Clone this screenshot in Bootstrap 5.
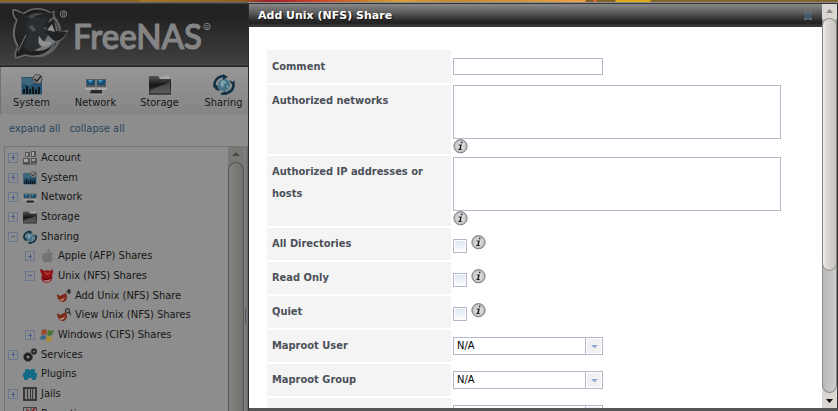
<!DOCTYPE html>
<html lang="en">
<head>
<meta charset="utf-8">
<title>FreeNAS</title>
<link rel="stylesheet" href="https://cdn.jsdelivr.net/npm/bootstrap@5.3.0/dist/css/bootstrap.min.css">
<style>
body{width:838px;height:411px;background:#8d8d8d;font:11px/14px "DejaVu Sans Condensed","DejaVu Sans",sans-serif;font-stretch:condensed;color:#161616}
svg{display:block;flex:none}
.wide{font-family:"DejaVu Sans",sans-serif;font-stretch:normal}
.topstrip{height:2px;background:linear-gradient(90deg,#8c6424 0 140px,#a5762c 141px,#8d6325 240px,#a11c2c 270px,#cc482d 320px,#c7842c 370px,#d7a13b 400px,#c08b35 450px,#d3943b 520px,#eba34a 585px,#85602a 586px 593px,#e06945 594px 596px,#806129 597px 615px,#dbaa17 616px 650px,#83652d 651px)}
.side{width:248px}
.brand{height:65px;background:linear-gradient(#5d5d5d 0 1px,#232323 2px,#222 15px,#404040 61px,#4a4a4a 63px,#222 64px)}
.tools{height:47px;background:linear-gradient(#969696,#858585);border-left:1px solid #6b747c}
.tool{width:64px;padding-top:7px;padding-right:3px}
.tool svg{margin-bottom:1px}
.links{height:32px;padding:8px 0 0 9px;color:#27455f;gap:9px}
.treebox{margin-left:4px;width:240px;border:1px solid #747474;border-bottom:0;border-right:0}
.node{height:19.7px;flex:none;gap:4px;white-space:nowrap}
.exp{width:10px;height:10px;border:1px solid #6b7790;flex:none;margin-right:1px;background:linear-gradient(#4b5f8a,#4b5f8a) center/4px 1px no-repeat}
.plus{background:linear-gradient(#4b5f8a,#4b5f8a) center/4px 1px no-repeat,linear-gradient(#4b5f8a,#4b5f8a) center/1px 5px no-repeat}
.noexp{width:10px;margin-right:1px;flex:none}
.dimbar{width:16px;background:#7a7874}
.dimthumb{border:1px solid #555;border-bottom:0;border-radius:8px 8px 0 0;background:linear-gradient(90deg,#858380,#72706c)}
.splitter{width:4px;background:linear-gradient(90deg,#878787,#696969)}
.dlg{left:248px;top:3px;width:590px;height:408px;background:#fff;border:1px solid #333;border-top:1px solid #343539;border-left-color:#2b2b2b;border-bottom:3px solid #555}
.title-strip{height:23px;background:linear-gradient(#888 0,#606060 8px,#262626 17px,#242424 20px,#383838 21px);color:#fff;font-weight:700;padding:0 9px 0 9px;text-shadow:1px 1px 1px #111}
.formgrid{margin:23px 0 0 18px;display:grid;grid-template-columns:184px 328px;column-gap:2px;row-gap:2px;grid-template-rows:33px 69px 70px repeat(6,32px)}
.lbl{background:#f4f4f4;color:#4b5059;font-weight:700;font-size:11px;line-height:22px;padding:5px 5px}
.lbl:first-child{padding-top:6px}
.inp{border:1px solid #b3b8c8;background:#fff}
.inp.one{width:150px;height:17px;margin-top:8px}
.inp.area{width:328px;height:54px}
.inp.sel{width:150px;height:18px;margin-top:7px;color:#000;padding-left:3px;line-height:16px}
.arrow{width:17px;border-left:1px solid #b3b8c8;background:#f1f1f1;box-shadow:inset 0 0 0 1px #fff}
.chk{width:14px;height:14px;border:1px solid #b3b8c8;background:linear-gradient(#d9e5ee,#fff);box-shadow:inset 0 0 0 1px #fff;margin:11px 4px 0 0}
.tip{margin-top:7px}
.sbar{width:15px;background:#dad7d3}
.strack{background:linear-gradient(90deg,#b9b9b8,#cecdcc);border:1px solid #8b8b8b;border-radius:0 0 8px 8px;border-top:0}
.sthumb{height:253px;margin:-1px -1px 0;border:1px solid #888580;border-radius:8px;background:linear-gradient(90deg,#eceae8 0 1px,#dedbd8 3px,#c7c3bf)}
</style>
<script src="https://cdn.jsdelivr.net/npm/bootstrap@5.3.0/dist/js/bootstrap.bundle.min.js"></script>
</head>
<body class="m-0 overflow-hidden position-relative">
<svg width="0" height="0" class="position-absolute">
<defs>
<radialGradient id="ig"><stop offset="0" stop-color="#eee"/><stop offset="1" stop-color="#bbb"/></radialGradient>
<linearGradient id="fg" x2="0" y2="1"><stop stop-color="#555"/><stop offset=".5" stop-color="#151515"/><stop offset="1" stop-color="#555"/></linearGradient>
<linearGradient id="bg" x2="1" y2="1"><stop stop-color="#333"/><stop offset="1" stop-color="#858b91"/></linearGradient>
<symbol id="info" viewBox="0 0 15 15"><circle cx="7.5" cy="7.2" r="6.6" fill="url(#ig)" stroke="#777"/><path d="M8.2 2.8h1.4l-.4 1.5H7.8zM5.7 5.6h3.2L7.8 10h1l-.3.9H5.2l.3-.9h.7l.9-3.4H5.5z" fill="#222"/></symbol>
<symbol id="sys" viewBox="0 0 22 21"><rect x=".5" y="3" width="20.500" height="17.500" fill="#235170"/><path d="M1 4h19v6L14 8l-5 4-8-3z" fill="#40687d"/><path d="M3 20v-5m3 5v-8m3 8v-5m3 5v-7m3 7v-5m3 5v-7" stroke="#111" stroke-width="1.800"/><circle cx="16.500" cy="5" r="4.600" fill="#858585" stroke="#4d4d4d"/><path d="M13.500 5l2.200 2.500L20 2" fill="none" stroke="#222" stroke-width="1.300"/></symbol>
<symbol id="net" viewBox="0 0 22 21"><path d="M1 5h9.500v8H1zm10.500 0H21v8h-9.500z" fill="#555a5d"/><path d="M2 6h7.500v5H2zm10.500 0H20v5h-7.500z" fill="#104f76"/><path d="M3 6h5L5 9zm10 0h5l-3 3z" fill="#5493ac"/><path d="M0 14h10v2H0zm12 0h10v2H12z" fill="#aaa"/><path d="M6 16h11v4H5z" fill="#292929"/><path d="M5 20h13" stroke="#aaa"/></symbol>
<symbol id="fold" viewBox="0 0 22 21"><path d="M11 3l8-2 2 3v3H11z" fill="#a5a5a5"/><path d="M0 2h9l2 3h11v15.500H0z" fill="url(#fg)"/><path d="M1 18C6 12 14 12 21 8v11.500H1z" fill="#666" opacity=".65"/><path d="M0 20h22" stroke="#222"/></symbol>
<symbol id="share" viewBox="0 0 22 21"><circle cx="11" cy="11" r="6" fill="#427184"/><path d="M8 7l3-1 3 3-3 1-1 4-3-3zM14 11l2 1-2 3z" fill="#7ea3ad"/><path d="M2 13C0 7 5 2 11 2M20 8c2 6-2 11-9 12" fill="none" stroke="#102f43" stroke-width="2.600"/><path d="M10 0l5 3-5 3zM12 17l-5 3 5 2zM0 12l4-1 3 6-4-1zM16 6l4 2 2-2-2 6z" fill="#153449"/></symbol>
<symbol id="acct" viewBox="0 0 14 14"><path d="M2 1h5v5H2zM8 0h5v6H8zM0 7h7v6H0zM8 7h6v5H8z" fill="#555"/><path d="M3 2h2v3H3zm6-1h2v4H9zM1 8h4v3H1zm8 0h3v2H9z" fill="#a3a3a3"/><path d="M0 13h14" stroke="#444"/></symbol>
<symbol id="apple" viewBox="0 0 14 14"><path d="M7 4c3-2 5-1 6 1-2 2-1 4 0 5-1 3-3 4-6 3-3 1-5-2-5-5s2-5 5-4zM7 3c0-2 1-3 3-3 0 2-1 3-3 3z" fill="#727272"/></symbol>
<symbol id="nfs" viewBox="0 0 14 14"><path d="M0 0c2 0 3 1 4 2 2-1 4-1 6 0l3-2c0 3 0 4-1 6 1 4-1 7-5 8-5-1-7-4-5-8C1 4 0 2 0 0z" fill="#8f1217"/><path d="M3 8c3 3 7 2 9-1-1 4-2 5-5 5-2 0-4-1-4-4z" fill="#650509"/><path d="M3 10.500c3 1.500 5 1 8-1-1 2.500-2 3.500-4 3.500-2 0-3-1-4-2.500z" fill="#b08d8d"/><path d="M4 3l4 1 3-1-2 3-3 0z" fill="#b4372e"/></symbol>
<symbol id="nfsadd" viewBox="0 0 14 14"><path d="M0 5l3 2 2-1 4-2 1 4c0 3-2 5-5 5-3-1-5-4-5-8z" fill="#7c2918"/><path d="M2 10c2 1 4 0 6-2-1 3-2 4-4 4z" fill="#b38c7e"/><path d="M12 0v5M9.500 2.500h5" stroke="#333" stroke-width="1.800"/></symbol>
<symbol id="nfsview" viewBox="0 0 14 14"><path d="M0 5l3 2 2-1 4-2 1 4c0 3-2 5-5 5-3-1-5-4-5-8z" fill="#7c2918"/><path d="M2 10c2 1 4 0 6-2-1 3-2 4-4 4z" fill="#b69c90"/><circle cx="10.500" cy="2.700" r="2" fill="#888" stroke="#333" stroke-width="1.200"/><path d="M12 4l2 3" stroke="#333" stroke-width="1.500"/></symbol>
<symbol id="win" viewBox="0 0 14 14"><path d="M2 2c2-1 3-1 5 0L6 7C4 6 3 6 1 7z" fill="#98472a"/><path d="M8 2c2 1 4 1 6 0l-2 5c-2 1-3 1-5 0z" fill="#4b7734"/><path d="M1 8c2-1 3-1 5 0l-1 4c-2-1-3-1-5 0z" fill="#36658c"/><path d="M7 8c2 1 3 1 5 0l-1 5c-2 1-4 1-5 0z" fill="#a78c29"/></symbol>
<symbol id="gear" viewBox="0 0 14 14"><g fill="none" stroke="#222"><circle cx="5" cy="9" r="2.800" stroke-width="2.600"/><circle cx="5" cy="9" r="4.400" stroke-dasharray="1.500 1"/><circle cx="11" cy="3.500" r="1.800" stroke-width="1.800"/><circle cx="11" cy="3.500" r="3" stroke-dasharray="1 1"/></g></symbol>
<symbol id="plug" viewBox="0 0 14 14"><path d="M2.500 2h3.500v1h2V2h3.500l1 4H14v4h-1v3H9v-2H5v2H1v-3H0V6h1.500z" fill="#146b86"/></symbol>
<symbol id="jail" viewBox="0 0 14 14"><path d="M0 0h14v14H0z" fill="#383838"/><path d="M2 2h2v10H2zm3 0h2v10H5zm3 0h1v10H8zm2 0h2v10h-2z" fill="#858585"/></symbol>
<symbol id="rep" viewBox="0 0 14 14"><path d="M.5.500h13v13H.5zM4 0v14M8 0v14M0 5h14" fill="none" stroke="#444"/><path d="M1 6l4-2 3 2 4-5" fill="none" stroke="#8d2524" stroke-width="2"/></symbol>
</defs></svg>

<div class="topstrip"></div>
<div class="side d-flex flex-column" style="height:409px">
  <header class="brand flex-shrink-0">
    <svg width="248" height="65" viewBox="0 2 248 65">
      <circle cx="37" cy="33" r="23" fill="#292b2d" stroke="#606263" stroke-width="2.500"/>
      <path d="M13 10c3-1 7 2 10 4 8-6 18-7 28-1l3-1-1 8c3 4 4 7 4 13l10-2c-2 6-6 10-12 11-5 12-17 17-30 13l-9 3c-2-4 0-8 2-12-5-8-5-18-1-26-3-2-4-6-4-10z" fill="#1e1e1e" stroke="#676869" stroke-width="1.600"/>
      <circle cx="38" cy="32" r="19" fill="url(#bg)"/>
      <path d="M16 12c6 0 11 4 15 7 9-6 15-7 23-6-4 4-6 9-7 14l-9 1-4 5 7 3c-2 6-5 9-11 11l-8 1-5 8 2-14c-4-9-3-17-1-24z" fill="#222425"/>
      <path d="M26 22l10-5 11 2-3 8 4 8-7 12-10 5-8-5 5-12z" fill="#2b2e30"/>
      <path d="M48 23l6-4 2 12 11 1c-3 6-8 10-14 8l-8-8z" fill="#202122"/>
      <path d="M39 36l4 5 9 1c-3 4-7 6-11 4-3-2-3-6-2-10zM47 30l5-6 3 8z" fill="#909090"/>
      <path d="M29 27l3-2 4 5-3 2z" fill="#4d5256"/>
      <path d="M18 51l8-16" stroke="#777"/>
      <g fill="none" stroke="#808080"><circle cx="63.500" cy="14" r="3.200"/><circle cx="207" cy="26.500" r="3.200"/></g>
      <text x="61.700" y="16.400" font-size="6" fill="#858585" font-family="Lato,sans-serif">R</text><text x="205.200" y="28.900" font-size="6" fill="#858585" font-family="Lato,sans-serif">R</text>
      <text x="73" y="48.500" font-size="34.500" font-weight="500" fill="#858585" stroke="#858585" stroke-width="1.200" font-family="Lato,sans-serif" textLength="129" lengthAdjust="spacingAndGlyphs">FreeNAS</text>
    </svg>
  </header>
  <nav class="tools d-flex flex-shrink-0 overflow-hidden">
    <div class="tool flex-shrink-0 d-flex flex-column align-items-center"><svg width="22" height="21"><use href="#sys"/></svg>System</div>
    <div class="tool flex-shrink-0 d-flex flex-column align-items-center"><svg width="22" height="21"><use href="#net"/></svg>Network</div>
    <div class="tool flex-shrink-0 d-flex flex-column align-items-center"><svg width="22" height="21"><use href="#fold"/></svg>Storage</div>
    <div class="tool flex-shrink-0 d-flex flex-column align-items-center"><svg width="22" height="21"><use href="#share"/></svg>Sharing</div>
  </nav>
  <div class="links d-flex flex-shrink-0"><span>expand all</span><span>collapse all</span></div>
  <div class="d-flex flex-grow-1" style="min-height:0">
    <div class="treebox d-flex overflow-hidden">
      <div class="flex-grow-1 d-flex flex-column overflow-hidden" style="padding:1px 0 0 3px">
        <div class="node d-flex align-items-center"><i class="exp plus"></i><svg width="14" height="14"><use href="#acct"/></svg>Account</div>
        <div class="node d-flex align-items-center"><i class="exp plus"></i><svg width="14" height="14"><use href="#sys"/></svg>System</div>
        <div class="node d-flex align-items-center"><i class="exp plus"></i><svg width="14" height="14"><use href="#net"/></svg>Network</div>
        <div class="node d-flex align-items-center"><i class="exp plus"></i><svg width="14" height="14"><use href="#fold"/></svg>Storage</div>
        <div class="node d-flex align-items-center"><i class="exp"></i><svg width="14" height="14"><use href="#share"/></svg>Sharing</div>
        <div class="node d-flex align-items-center" style="padding-left:17px"><i class="exp plus"></i><svg width="14" height="14"><use href="#apple"/></svg>Apple (AFP) Shares</div>
        <div class="node d-flex align-items-center" style="padding-left:17px"><i class="exp"></i><svg width="14" height="14"><use href="#nfs"/></svg>Unix (NFS) Shares</div>
        <div class="node d-flex align-items-center" style="padding-left:34px"><i class="noexp"></i><svg width="14" height="14"><use href="#nfsadd"/></svg>Add Unix (NFS) Share</div>
        <div class="node d-flex align-items-center" style="padding-left:34px"><i class="noexp"></i><svg width="14" height="14"><use href="#nfsview"/></svg>View Unix (NFS) Shares</div>
        <div class="node d-flex align-items-center" style="padding-left:17px"><i class="exp plus"></i><svg width="14" height="14"><use href="#win"/></svg>Windows (CIFS) Shares</div>
        <div class="node d-flex align-items-center"><i class="exp plus"></i><svg width="14" height="14"><use href="#gear"/></svg>Services</div>
        <div class="node d-flex align-items-center"><i class="noexp"></i><svg width="14" height="14"><use href="#plug"/></svg>Plugins</div>
        <div class="node d-flex align-items-center"><i class="exp plus"></i><svg width="14" height="14"><use href="#jail"/></svg>Jails</div>
        <div class="node d-flex align-items-center"><i class="noexp"></i><svg width="14" height="14"><use href="#rep"/></svg>Reporting</div>
      </div>
      <div class="dimbar flex-shrink-0 d-flex flex-column"><svg width="16" height="15"><path d="M4 9l4-4 4 4z" fill="#484848"/></svg><div class="dimthumb flex-grow-1"></div></div>
    </div>
    <div class="splitter"><svg width="4" height="260"><path d="M1.500 161v17" stroke="#52555d"/></svg></div>
  </div>
</div>

<div class="dlg position-absolute d-flex">
  <div class="flex-grow-1 overflow-hidden">
    <div class="title-strip wide d-flex align-items-center justify-content-between"><span>Add Unix (NFS) Share</span><svg width="10" height="10" viewBox="0 0 10 10"><path d="M1 1.500h3l1 1.500 1-1.500h3L6.500 5 9 8.500H6L5 7 4 8.500H1L3.500 5z" fill="#405463" stroke="#78818a" stroke-width=".7"/></svg></div>
    <div class="formgrid">
      <div class="lbl">Comment</div><div><div class="inp one"></div></div>
      <div class="lbl">Authorized networks</div><div><div class="inp area"></div><svg width="15" height="15"><use href="#info"/></svg></div>
      <div class="lbl">Authorized IP addresses or hosts</div><div style="padding-top:1px"><div class="inp area"></div><svg width="15" height="15"><use href="#info"/></svg></div>
      <div class="lbl">All Directories</div><div class="d-flex"><div class="chk"></div><svg width="15" height="15" class="tip"><use href="#info"/></svg></div>
      <div class="lbl">Read Only</div><div class="d-flex"><div class="chk"></div><svg width="15" height="15" class="tip"><use href="#info"/></svg></div>
      <div class="lbl">Quiet</div><div class="d-flex"><div class="chk"></div><svg width="15" height="15" class="tip"><use href="#info"/></svg></div>
      <div class="lbl">Maproot User</div><div><div class="inp sel d-flex justify-content-between"><span>N/A</span><div class="arrow"><svg width="16" height="16"><path d="M5 7h7L8.500 10.500z" fill="#8eabd3"/></svg></div></div></div>
      <div class="lbl">Maproot Group</div><div><div class="inp sel d-flex justify-content-between"><span>N/A</span><div class="arrow"><svg width="16" height="16"><path d="M5 7h7L8.500 10.500z" fill="#8eabd3"/></svg></div></div></div>
      <div class="lbl"></div><div><div class="inp sel d-flex justify-content-end"><div class="arrow"></div></div></div>
    </div>
  </div>
  <div class="sbar flex-shrink-0 d-flex flex-column">
    <svg width="15" height="15"><path d="M4 9l3.500-4L11 9z" fill="#8a8783"/></svg>
    <div class="strack flex-grow-1"><div class="sthumb"></div></div>
    <svg width="15" height="15"><path d="M4 6h7L7.500 10z" fill="#111"/></svg>
  </div>
</div>
</body>
</html>
